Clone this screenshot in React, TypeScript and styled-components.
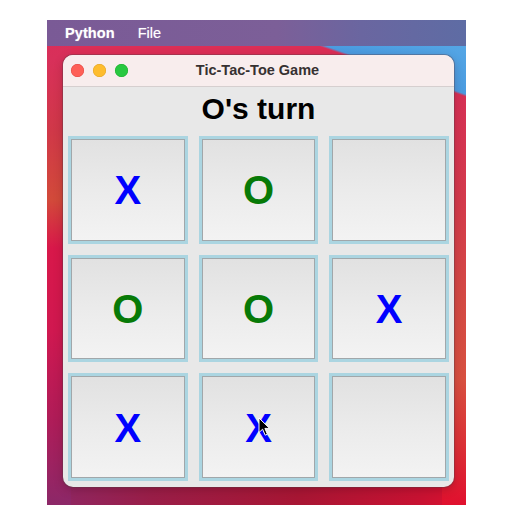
import React from "react";
import styled, { createGlobalStyle } from "styled-components";

const Global = createGlobalStyle`
  html, body { margin: 0; padding: 0; background: #ffffff; }
  body { font-family: "Liberation Sans", Arial, sans-serif; }
`;

const Desktop = styled.div`
  width: 419px;
  height: 485px;
  margin: 20px 0 0 47px;
  display: flex;
  flex-direction: column;
  background:
    linear-gradient(19deg, transparent 87.8%, #4a9be0 88.2%, #5aace8 100%),
    linear-gradient(to bottom, #dc2c58 0%, #d8305a 8%, #d03848 23%, #d24a3a 37%, #d8184a 47%, #d01850 64%, #b01c58 82%, #8c2868 100%) left top / 24px 100% no-repeat,
    linear-gradient(to bottom, #d63055 15%, #d43a4c 37%, #d44a44 58%, #d85040 74%, #dc3036 88%, #e0102e 100%) right top / 24px 100% no-repeat,
    linear-gradient(to right, #8e2866 0%, #9a1e48 25%, #a81634 60%, #c81232 89%, #dc1230 100%) left bottom / 100% 24px no-repeat,
    #dc2e56;
`;

const MenuBar = styled.div`
  height: 26px;
  display: flex;
  align-items: center;
  gap: 23px;
  padding-left: 18px;
  background: linear-gradient(to right, #7a5a96 0%, #7c5f98 55%, #6a66a0 75%, #5e6ca4 100%);
`;

const MenuItem = styled.span<{ $strong?: boolean }>`
  color: #ffffff;
  font-family: "Liberation Sans", Arial, sans-serif;
  font-size: 14.5px;
  font-weight: ${(p) => (p.$strong ? 700 : 400)};
  letter-spacing: ${(p) => (p.$strong ? "0.1px" : "0")};
  text-shadow: 0 0 1px rgba(255, 255, 255, 0.5);
`;

const Window = styled.div`
  width: 391px;
  height: 432px;
  margin: 9px 0 0 16px;
  border-radius: 10px;
  overflow: hidden;
  display: flex;
  flex-direction: column;
  background: #e8e8e8;
  box-shadow: 0 0 0 1px rgba(90, 60, 70, 0.35), 0 3px 10px rgba(60, 0, 20, 0.25);
`;

const TitleBar = styled.div`
  height: 31px;
  flex: none;
  display: flex;
  align-items: center;
  background: #f8eded;
  border-bottom: 1px solid #d6cfcf;
`;

const Lights = styled.div`
  display: flex;
  gap: 9px;
  padding-left: 8px;
`;

const Light = styled.span<{ $color: string; $edge: string }>`
  width: 13px;
  height: 13px;
  border-radius: 50%;
  background: ${(p) => p.$color};
  box-shadow: inset 0 0 0 0.5px ${(p) => p.$edge};
`;

const Title = styled.div`
  flex: 1;
  text-align: center;
  margin-right: 67px;
  font-family: "Liberation Sans", Arial, sans-serif;
  font-weight: 700;
  font-size: 14.5px;
  color: #363131;
  padding-bottom: 1px;
`;

const Body = styled.div`
  flex: 1;
  display: flex;
  flex-direction: column;
  padding: 5px 5px 6px;
`;

const Status = styled.h1`
  margin: 0 0 10px;
  height: 34px;
  line-height: 34px;
  text-align: center;
  font-family: "Liberation Sans", Arial, sans-serif;
  font-weight: 700;
  font-size: 30px;
  color: #000000;
`;

const Board = styled.div`
  flex: 1;
  display: grid;
  grid-template-columns: repeat(3, 1fr);
  grid-template-rows: repeat(3, 1fr);
  gap: 11px;
`;

const Cell = styled.div`
  position: relative;
  display: flex;
  align-items: center;
  justify-content: center;
  border: 3px solid #abd5e1;
  box-shadow: inset 0 0 0 1px #a1a7aa;
  background: linear-gradient(to bottom, #e1e1e1 0%, #ebebeb 50%, #f3f3f3 100%);
`;

const Mark = styled.span<{ $player: "X" | "O" }>`
  font-family: "Liberation Sans", Arial, sans-serif;
  font-weight: 700;
  font-size: 40px;
  line-height: 1;
  color: ${(p) => (p.$player === "X" ? "#0000ff" : "#077a07")};
  margin-top: 1px;
`;

const Pointer = styled.svg`
  position: absolute;
  left: 56px;
  top: 41px;
  width: 13px;
  height: 20px;
`;

const board: ("X" | "O" | "")[] = ["X", "O", "", "O", "O", "X", "X", "X", ""];

export default function App() {
  return (
    <>
      <Global />
      <Desktop>
        <MenuBar>
          <MenuItem $strong>Python</MenuItem>
          <MenuItem>File</MenuItem>
        </MenuBar>
        <Window>
          <TitleBar>
            <Lights>
              <Light $color="#fe5f57" $edge="#e0443e" />
              <Light $color="#febc2e" $edge="#dea123" />
              <Light $color="#28c840" $edge="#1aab29" />
            </Lights>
            <Title>Tic-Tac-Toe Game</Title>
          </TitleBar>
          <Body>
            <Status>O's turn</Status>
            <Board>
              {board.map((v, i) => (
                <Cell key={i}>
                  {v && <Mark $player={v}>{v}</Mark>}
                  {i === 7 && (
                    <Pointer viewBox="0 0 13 20">
                      <path
                        d="M1 1 L1 15.5 L4.6 12.2 L7.2 18.2 L9.4 17.2 L6.9 11.4 L11.6 11.4 Z"
                        fill="#000"
                        stroke="#fff"
                        strokeWidth="1"
                        strokeLinejoin="round"
                      />
                    </Pointer>
                  )}
                </Cell>
              ))}
            </Board>
          </Body>
        </Window>
      </Desktop>
    </>
  );
}
